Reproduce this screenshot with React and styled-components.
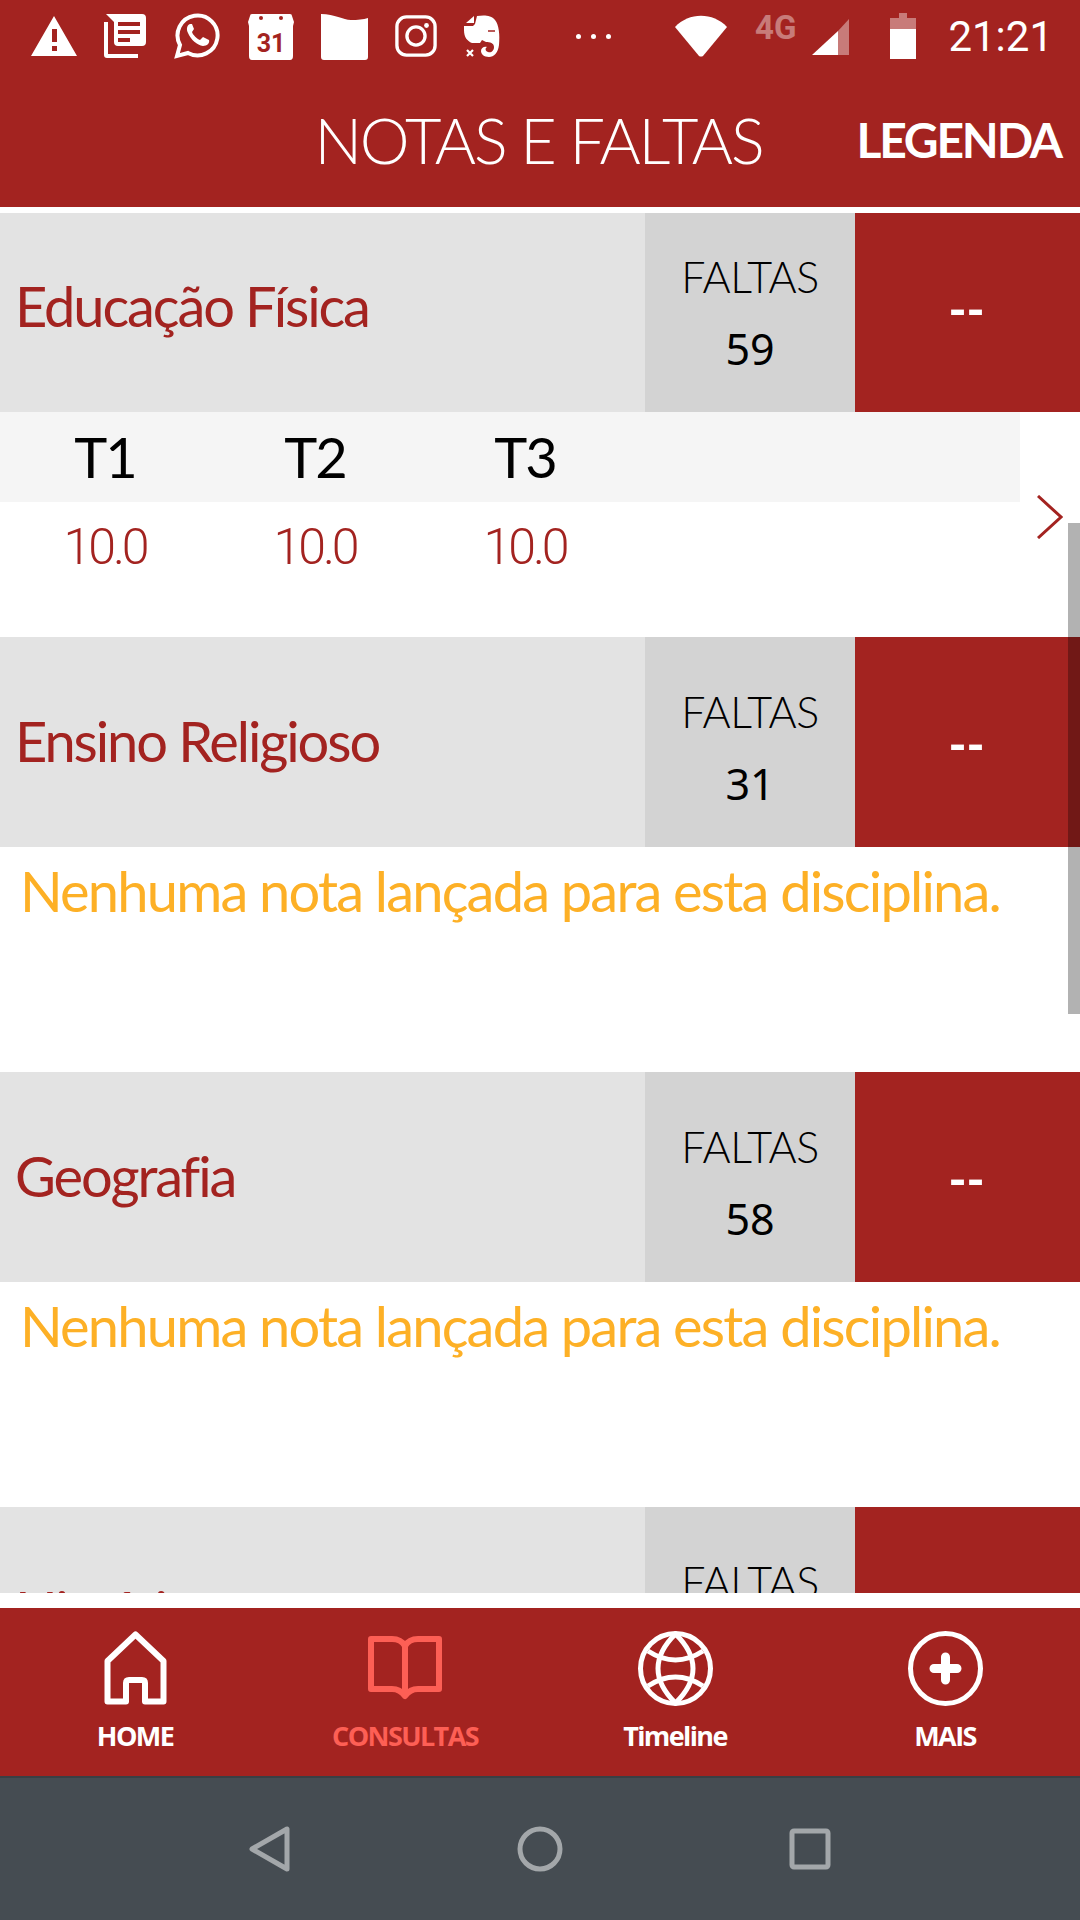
import React from 'react'
import styled, { createGlobalStyle } from 'styled-components'

const Global = createGlobalStyle`
  html, body { margin: 0; padding: 0; background: #fff; }
  body { font-family: Lato, "Open Sans", sans-serif; }
  * { box-sizing: border-box; }
`

const Page = styled.div`
  position: relative;
  width: 1080px;
  height: 1920px;
  display: flex;
  flex-direction: column;
  overflow: hidden;
  background: #fff;
`

const Top = styled.header`
  height: 207px;
  flex: none;
  background: #a32320;
  color: #fff;
`

const StatusBar = styled.div`
  height: 72px;
  display: flex;
  align-items: center;
  padding: 0 27px 0 31px;
`

const NotifIcons = styled.div`
  display: flex;
  align-items: center;
  gap: 27px;
`

const Dots = styled.div`
  display: flex;
  gap: 10px;
  margin-left: 76px;
  i { width: 5px; height: 5px; border-radius: 50%; background: #fff; display: block; }
`

const SysIcons = styled.div`
  margin-left: auto;
  display: flex;
  align-items: center;
`

const FourG = styled.span`
  font-family: Roboto, sans-serif;
  font-weight: 700;
  font-size: 33px;
  line-height: 1;
  opacity: 0.4;
  margin: -18px 16px 0 28px;
`

const BatterySlot = styled.span`
  display: flex;
  margin-left: 41px;
`

const Clock = styled.span`
  font-family: Roboto, sans-serif;
  font-size: 42px;
  margin-left: 32px;
`

const TitleBar = styled.div`
  height: 135px;
  display: flex;
  align-items: center;
  justify-content: flex-end;
  padding: 0 19px 0 0;
`

const Title = styled.h1`
  margin: 0 94px 0 0;
  font-family: Lato, sans-serif;
  font-weight: 300;
  font-size: 63px;
  letter-spacing: -2.2px;
  line-height: 1;
`

const Legend = styled.span`
  font-family: Lato, sans-serif;
  font-weight: 700;
  font-size: 48px;
  letter-spacing: -2.2px;
  line-height: 1;
`

const List = styled.main`
  flex: none;
  height: 1380px;
  margin-top: 6px;
  overflow: hidden;

  /* the list is scrolled a little, the first row is cut by its top edge */
  section:first-child {
    margin-top: -11px;
  }
`

const Head = styled.div`
  display: flex;
  height: 210px;
`

const Name = styled.div`
  flex: 1;
  background: #e3e3e3;
  color: #a32320;
  font-family: Lato, sans-serif;
  font-size: 56px;
  letter-spacing: -2.1px;
  display: flex;
  align-items: center;
  padding: 0 0 3px 15px;
`

const Absences = styled.div`
  width: 210px;
  background: #d3d3d3;
  display: flex;
  flex-direction: column;
  align-items: center;
  justify-content: center;
  color: #000;
  padding-top: 12px;
`

const AbsLabel = styled.span`
  font-family: Lato, sans-serif;
  font-weight: 300;
  font-size: 43px;
  letter-spacing: -0.5px;
  line-height: 72px;
`

const AbsValue = styled.span`
  font-family: "Noto Sans", sans-serif;
  font-size: 43px;
  line-height: 72px;
`

const Grade = styled.div`
  width: 225px;
  background: #a32320;
  color: #fff;
  font-family: "Noto Sans", sans-serif;
  font-size: 50px;
  font-weight: 600;
  letter-spacing: 2px;
  display: flex;
  align-items: center;
  justify-content: center;
`

const Terms = styled.div`
  position: relative;
  height: 225px;
`

const TermHead = styled.div`
  width: 1020px;
  height: 90px;
  background: #f5f5f5;
  display: flex;
`

const TermVals = styled.div`
  display: flex;
  height: 90px;
`

const TermCell = styled.div`
  width: 210px;
  text-align: center;
  font-family: ${p => (p.$val ? 'Roboto, sans-serif' : 'Lato, sans-serif')};
  font-weight: ${p => (p.$val ? 300 : 400)};
  font-size: ${p => (p.$val ? 50 : 56)}px;
  letter-spacing: ${p => (p.$val ? -3 : -2)}px;
  line-height: 90px;
  color: ${p => (p.$val ? '#a32320' : '#000')};
`

const Arrow = styled.svg`
  position: absolute;
  right: 17px;
  top: 83px;
`

const Empty = styled.p`
  margin: 0;
  height: 225px;
  padding-left: 20px;
  color: #fdb026;
  font-family: Lato, sans-serif;
  font-size: 56px;
  letter-spacing: -1.8px;
  line-height: 88px;
  white-space: nowrap;
`

const Thumb = styled.div`
  position: absolute;
  right: 0;
  top: 523px;
  width: 12px;
  height: 491px;
  background: rgba(0, 0, 0, 0.3);
`

const Nav = styled.nav`
  flex: none;
  margin-top: 15px;
  height: 168px;
  background: #a32320;
  display: grid;
  grid-template-columns: repeat(4, 270px);
`

const NavItem = styled.div`
  display: flex;
  flex-direction: column;
  align-items: center;
  padding-top: 22px;
  color: ${p => (p.$active ? '#fd5f55' : '#fff')};
`

const IconBox = styled.span`
  height: 76px;
  display: flex;
  align-items: center;
`

const NavLabel = styled.span`
  font-family: "Open Sans", sans-serif;
  font-weight: 700;
  font-size: 27px;
  letter-spacing: -1.6px;
  line-height: 34px;
  margin-top: 13px;
`

const SoftKeys = styled.div`
  flex: none;
  height: 144px;
  background: #454c52;
  border-top: 2px solid #3a3f44;
  display: grid;
  grid-template-columns: repeat(3, 270px);
  justify-content: center;
  justify-items: center;
  align-items: center;
`

const Warn = () => (
  <svg width="46" height="40" viewBox="0 0 46 40"><path fillRule="evenodd" fill="#fff" d="M23 0 46 40H0ZM21 13v13h5V13ZM21 30v5h5v-5Z" /></svg>
)
const News = () => (
  <svg width="42" height="44" viewBox="0 0 42 44" fill="#fff">
    <path fillRule="evenodd" d="M2 0h36q4 0 4 4v24q0 4-4 4H14q-4 0-4-4V8ZM14 8v4h22V8ZM14 16v4h22v-4ZM14 24v4h12v-4Z" />
    <path d="M0 8h4v32h30v4H3q-3 0-3-3Z" />
  </svg>
)
const Whats = () => (
  <svg width="48" height="48" viewBox="0 0 48 48" fill="none">
    <path d="M4 44l3-11A20 20 0 1 1 15 41Z" stroke="#fff" strokeWidth="4" />
    <path fill="#fff" d="M17 12c-3 1-4 5-2 9 3 7 9 12 15 13 4 0 7-3 6-6l-6-3-3 3c-3-1-7-5-8-8l2-3-2-5Z" />
  </svg>
)
const Cal = () => (
  <svg width="46" height="48" viewBox="0 0 46 48">
    <path fill="#fff" d="M4 2h38q2 0 2 2l2 6-1 4v30q0 4-3 4H4q-3 0-3-4V14L0 10l2-6q0-2 2-2Z" />
    <circle cx="13" cy="6" r="2" fill="#a32320" />
    <circle cx="33" cy="6" r="2" fill="#a32320" />
    <text x="23" y="40" textAnchor="middle" fontFamily="Roboto" fontWeight="700" fontSize="25" fill="#a32320">31</text>
  </svg>
)
const Folder = () => (
  <svg width="47" height="48" viewBox="0 0 47 48"><path fill="#fff" d="M0 2C14 2 22 8 30 8Q40 8 47 6V45q0 3-3 3H3q-3 0-3-3Z" /></svg>
)
const Insta = () => (
  <svg width="42" height="44" viewBox="0 0 44 44" fill="none" stroke="#fff" strokeWidth="3.5">
    <rect x="2" y="2" width="40" height="40" rx="10" />
    <circle cx="22" cy="22" r="9.5" />
    <circle cx="33" cy="11" r="2.5" fill="#fff" stroke="none" />
  </svg>
)
const Elephant = () => (
  <svg width="36" height="43" viewBox="0 0 36 43">
    <path fill="#fff" d="M13 1C20 0 27 0 31 5C35 10 36 20 35 30C34 38 30 42 25 42C20 42 17 39 17 36C17 33 20 31 23 32C21 33 21 36 24 37C27 38 30 36 30 32C30 28 26 27 22 27L18 25L16 28L8 28C3 26 0 22 0 15L0 11L9 11L11 9Z" />
    <path fill="#fff" d="M2 8 10 1V8Z" />
    <path d="M24 16h7" stroke="#a32320" strokeWidth="1.5" fill="none" />
    <path d="M3 35l6 6M9 35l-6 6" stroke="#fff" strokeWidth="2.2" />
  </svg>
)
const Wifi = () => (
  <svg width="52" height="42" viewBox="0 0 52 42"><path fill="#fff" d="M0 12C14-3 38-3 52 12L28 41q-2 1-4 0Z" /></svg>
)
const Signal = () => (
  <svg width="37" height="38" viewBox="0 0 37 38">
    <path fill="#fff" d="M26 14 0 38h26Z" />
    <path fill="#fff" opacity=".4" d="M26 14 37 2v36H26Z" />
  </svg>
)
const Battery = () => (
  <svg width="26" height="46" viewBox="0 0 26 46">
    <path fill="#fff" opacity=".4" d="M9 0h8v5h9v11H0V5h9Z" />
    <rect y="16" width="26" height="30" fill="#fff" />
  </svg>
)

const HomeIcon = () => (
  <svg width="63" height="74" viewBox="0 0 63 74" fill="none" stroke="currentColor" strokeWidth="6" strokeLinejoin="round">
    <path d="M3.5 30 31.5 3.5 59.5 30V70.5H41V52q0-3-3-3H25q-3 0-3 3V70.5H3.5Z" />
  </svg>
)
const BookIcon = () => (
  <svg width="74" height="64" viewBox="0 0 74 64" fill="none" stroke="currentColor" strokeWidth="6" strokeLinejoin="round">
    <path d="M3 3H24Q33 3 37 10 41 3 50 3H71V53H50Q42 53 37 60 32 53 24 53H3ZM37 10V58" />
  </svg>
)
const GlobeIcon = () => (
  <svg width="75" height="75" viewBox="0 0 75 75" fill="none" stroke="currentColor" strokeWidth="5">
    <circle cx="37.5" cy="37.5" r="35" />
    <path d="M37.5 3Q20 20 20 37.5T37.5 72Q55 55 55 37.5T37.5 3Z" />
    <path d="M10 20Q37.5 38 65 20M10 55Q37.5 37 65 55" />
  </svg>
)
const PlusIcon = () => (
  <svg width="75" height="75" viewBox="0 0 75 75" fill="none" stroke="currentColor">
    <circle cx="37.5" cy="37.5" r="35" strokeWidth="5" />
    <path d="M37.5 26v23M26 37.5h23" strokeWidth="9" strokeLinecap="round" />
  </svg>
)

const subjects = [
  { name: 'Educação Física', faltas: 59, terms: true },
  { name: 'Ensino Religioso', faltas: 31 },
  { name: 'Geografia', faltas: 58 },
  { name: 'História', faltas: 40 },
]

const terms = ['T1', 'T2', 'T3']

export default function App() {
  return (
    <Page>
      <Global />
      <Top>
        <StatusBar>
          <NotifIcons>
            <Warn /><News /><Whats /><Cal /><Folder /><Insta /><Elephant />
          </NotifIcons>
          <Dots><i /><i /><i /></Dots>
          <SysIcons>
            <Wifi />
            <FourG>4G</FourG>
            <Signal />
            <BatterySlot><Battery /></BatterySlot>
            <Clock>21:21</Clock>
          </SysIcons>
        </StatusBar>
        <TitleBar>
          <Title>NOTAS E FALTAS</Title>
          <Legend>LEGENDA</Legend>
        </TitleBar>
      </Top>
      <List>
        {subjects.map(s => (
          <section key={s.name}>
            <Head>
              <Name>{s.name}</Name>
              <Absences>
                <AbsLabel>FALTAS</AbsLabel>
                <AbsValue>{s.faltas}</AbsValue>
              </Absences>
              <Grade>--</Grade>
            </Head>
            {s.terms ? (
              <Terms>
                <TermHead>{terms.map(t => <TermCell key={t}>{t}</TermCell>)}</TermHead>
                <TermVals>{terms.map(t => <TermCell key={t} $val>10.0</TermCell>)}</TermVals>
                <Arrow width="26" height="44" viewBox="0 0 26 44" fill="none" stroke="#a32320" strokeWidth="3">
                  <path d="M1 1 24 22 1 43" />
                </Arrow>
              </Terms>
            ) : (
              <Empty>Nenhuma nota lançada para esta disciplina.</Empty>
            )}
          </section>
        ))}
      </List>
      <Thumb />
      <Nav>
        <NavItem><IconBox><HomeIcon /></IconBox><NavLabel>HOME</NavLabel></NavItem>
        <NavItem $active><IconBox><BookIcon /></IconBox><NavLabel>CONSULTAS</NavLabel></NavItem>
        <NavItem><IconBox><GlobeIcon /></IconBox><NavLabel>Timeline</NavLabel></NavItem>
        <NavItem><IconBox><PlusIcon /></IconBox><NavLabel>MAIS</NavLabel></NavItem>
      </Nav>
      <SoftKeys>
        <svg width="42" height="46" viewBox="0 0 42 46" fill="none" stroke="#a3a7aa" strokeWidth="5" strokeLinejoin="round"><path d="M38 3v40L3 23Z" /></svg>
        <svg width="46" height="46" viewBox="0 0 46 46" fill="none" stroke="#a3a7aa" strokeWidth="5"><circle cx="23" cy="23" r="20" /></svg>
        <svg width="42" height="42" viewBox="0 0 42 42" fill="none" stroke="#a3a7aa" strokeWidth="5"><rect x="3" y="3" width="36" height="36" rx="2" /></svg>
      </SoftKeys>
    </Page>
  )
}
